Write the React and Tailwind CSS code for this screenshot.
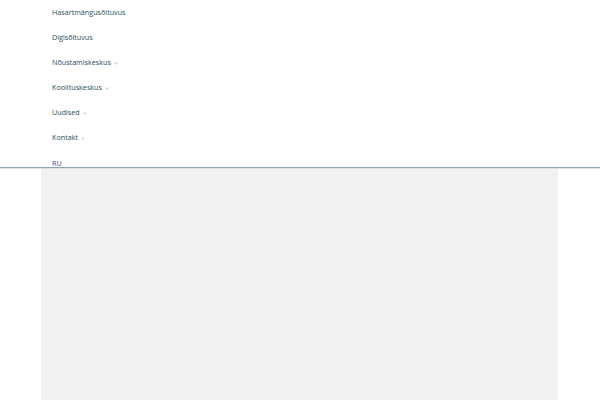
import React from "react";

const items = [
  { label: "Hasartmängusõltuvus" },
  { label: "Digisõltuvus" },
  { label: "Nõustamiskeskus", sub: true },
  { label: "Koolituskeskus", sub: true },
  { label: "Uudised", sub: true },
  { label: "Kontakt", sub: true },
];

const Caret = () => (
  <svg width="4" height="3" viewBox="0 0 4 3" className="ml-[3px] mt-[1px]">
    <path d="M0.5 0.8 L2 2.2 L3.5 0.8" fill="none" stroke="#9aa8b0" strokeWidth="0.8" />
  </svg>
);

const App = () => (
  <div className="w-[600px] h-[400px] bg-white overflow-hidden font-['Open_Sans',sans-serif]">
    <nav className="pl-[52px]">
      <ul className="flex flex-col">
        {items.map((it) => (
          <li key={it.label} className="h-[25px] flex items-center text-[7.2px] text-[#2a4d5c]">
            {it.label}
            {it.sub && <Caret />}
          </li>
        ))}
        <li className="h-[17px] pt-[9px] flex items-center text-[7.2px] text-[#45459a]">RU</li>
      </ul>
    </nav>
    <div className="h-[1px] bg-[#8fa3b0]" />
    <div className="h-[1px] bg-[#dde2e5]" />
    <div className="ml-[41px] w-[517px] h-[240px] bg-[#f1f1f1]" />
  </div>
);

export default App;
